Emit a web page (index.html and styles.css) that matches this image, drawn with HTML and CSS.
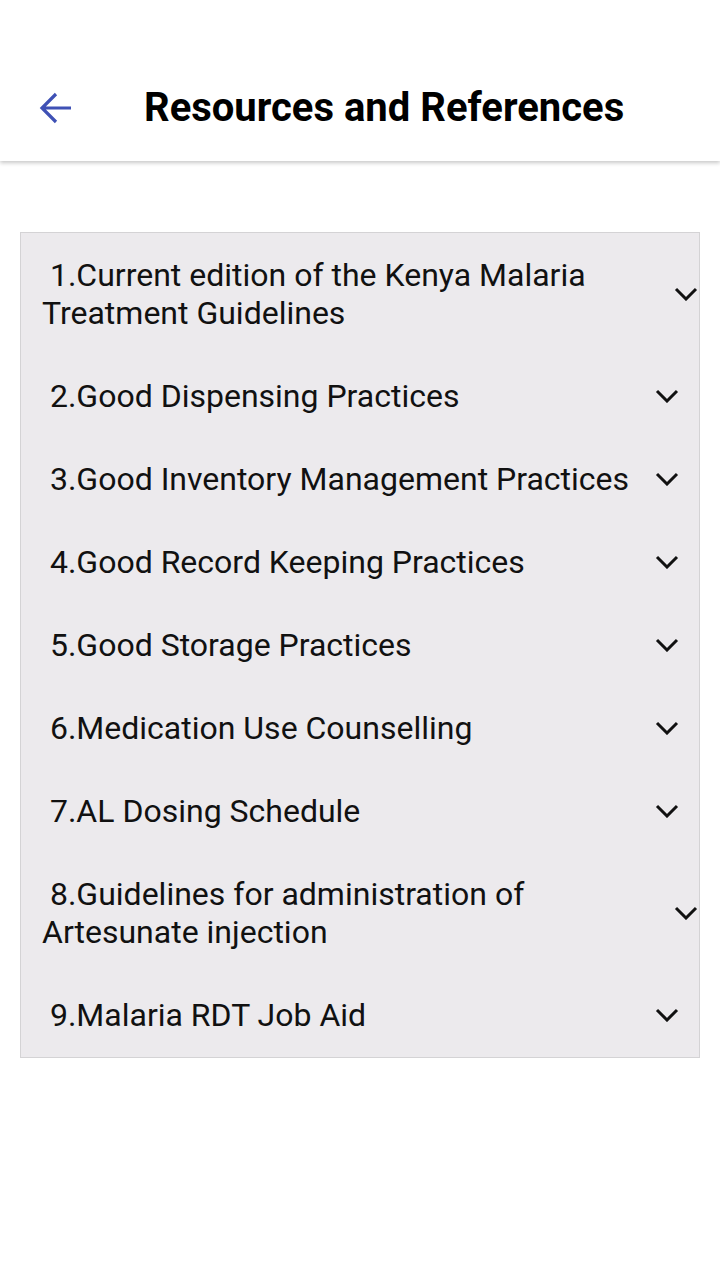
FILE: index.html
```html
<!DOCTYPE html>
<html>
<head>
<meta charset="utf-8">
<link rel="stylesheet" href="styles.css">
</head>
<body>
<header class="appbar">
  <svg class="back" width="34" height="34" viewBox="0 0 34 34">
    <path d="M32 17H4 M17 3 L3 17 L17 31" fill="none" stroke="#3F51B5" stroke-width="3.2" stroke-linejoin="miter" stroke-linecap="butt"/>
  </svg>
  <h1 class="title">Resources and References</h1>
</header>
<main class="content">
  <ul class="list">
    <li class="row wrap"><span class="label">&nbsp;1.Current edition of the Kenya Malaria Treatment Guidelines</span><svg class="chev" viewBox="0 0 24 14"><polyline points="2,2 12,12 22,2"/></svg></li>
    <li class="row"><span class="label">&nbsp;2.Good Dispensing Practices</span><svg class="chev" viewBox="0 0 24 14"><polyline points="2,2 12,12 22,2"/></svg></li>
    <li class="row"><span class="label">&nbsp;3.Good Inventory Management Practices</span><svg class="chev" viewBox="0 0 24 14"><polyline points="2,2 12,12 22,2"/></svg></li>
    <li class="row"><span class="label">&nbsp;4.Good Record Keeping Practices</span><svg class="chev" viewBox="0 0 24 14"><polyline points="2,2 12,12 22,2"/></svg></li>
    <li class="row"><span class="label">&nbsp;5.Good Storage Practices</span><svg class="chev" viewBox="0 0 24 14"><polyline points="2,2 12,12 22,2"/></svg></li>
    <li class="row"><span class="label">&nbsp;6.Medication Use Counselling</span><svg class="chev" viewBox="0 0 24 14"><polyline points="2,2 12,12 22,2"/></svg></li>
    <li class="row"><span class="label">&nbsp;7.AL Dosing Schedule</span><svg class="chev" viewBox="0 0 24 14"><polyline points="2,2 12,12 22,2"/></svg></li>
    <li class="row wrap"><span class="label">&nbsp;8.Guidelines for administration of Artesunate injection</span><svg class="chev" viewBox="0 0 24 14"><polyline points="2,2 12,12 22,2"/></svg></li>
    <li class="row"><span class="label">&nbsp;9.Malaria RDT Job Aid</span><svg class="chev" viewBox="0 0 24 14"><polyline points="2,2 12,12 22,2"/></svg></li>
  </ul>
</main>
</body>
</html>
```
FILE: styles.css
```css
* { box-sizing: border-box; }
html, body {
  margin: 0;
  padding: 0;
  background: #ffffff;
  font-family: Roboto, "Liberation Sans", sans-serif;
  color: #111111;
}
.appbar {
  height: 161px;
  background: #ffffff;
  display: flex;
  align-items: center;
  padding: 54px 0 0 39px;
  box-shadow: 0 2px 4px rgba(0,0,0,0.22);
  position: relative;
  z-index: 1;
}
.back {
  flex: none;
  width: 34px;
  height: 34px;
}
.title {
  margin: 0 0 0 71px;
  font-size: 40px;
  line-height: 40px;
  font-weight: 700;
  color: #000000;
}
.content {
  padding: 71px 20px 0 20px;
}
.list {
  list-style: none;
  margin: 0;
  padding: 1px 0 0 0;
  background: #ECEAED;
  border: 1px solid #D4D3D5;
}
.row {
  display: flex;
  align-items: center;
  padding: 22px 20px 23px 21px;
  font-size: 32px;
  line-height: 38px;
}
.row.wrap {
  padding-right: 1px;
}
.label {
  flex: 1 1 auto;
}
.chev {
  flex: none;
  width: 24px;
  height: 14px;
  margin-left: 8px;
}
.chev polyline {
  fill: none;
  stroke: #111111;
  stroke-width: 3;
}
```
